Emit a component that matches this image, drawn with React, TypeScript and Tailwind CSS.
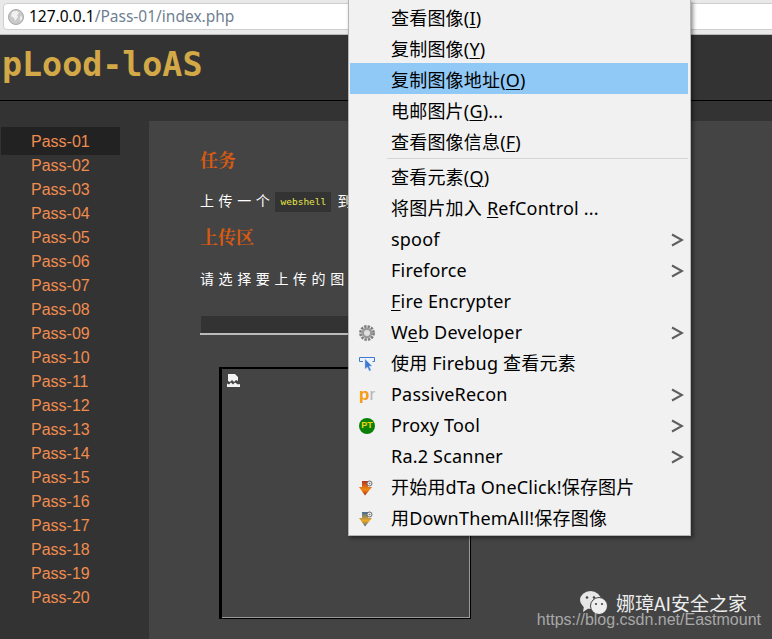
import type { ReactNode } from 'react'

const passes = Array.from({ length: 20 }, (_, i) => `Pass-${String(i + 1).padStart(2, '0')}`)

function Key({ children }: { children: ReactNode }) {
  return <span className="underline decoration-1 underline-offset-2">{children}</span>
}

function Globe() {
  return (
    <svg width="16" height="16" viewBox="0 0 16 16" className="shrink-0">
      <circle cx="8" cy="8" r="7.5" fill="#c9c9c9" stroke="#a8a8a8" />
      <path d="M5 2.5 9 2l2 2-2 2 1 2-3 4-1-3-3-2 1-3zM12 8l2-1v3l-2 2z" fill="#f1f1f1" />
    </svg>
  )
}

function Gear() {
  return (
    <svg width="16" height="16" viewBox="0 0 16 16">
      <circle cx="8" cy="8" r="6.6" fill="none" stroke="#7d7d7d" strokeWidth="2.6" strokeDasharray="2.4 1.1" />
      <circle cx="8" cy="8" r="5.4" fill="#9a9a9a" />
      <circle cx="8" cy="8" r="3" fill="#e0e0e0" />
    </svg>
  )
}

function Inspect() {
  return (
    <svg width="16" height="16" viewBox="0 0 16 16">
      <path d="M4 5.5H.5v-4h15v4h-2" fill="#eef4fc" stroke="#3f78d0" />
      <path d="M6 3l7 7-3 .2 2 4-1.6.8-2-4L6 13z" fill="#3f78d0" stroke="#a8c4ee" strokeWidth=".5" />
    </svg>
  )
}

function DownArrow({ id, top, mid, tip }: { id: string; top: string; mid: string; tip: string }) {
  return (
    <svg width="14" height="16" viewBox="0 0 14 16">
      <defs>
        <linearGradient id={id} x1="0" y1="0" x2="0" y2="1">
          <stop offset="0" stopColor={top} />
          <stop offset="0.6" stopColor={mid} />
          <stop offset="1" stopColor={tip} />
        </linearGradient>
      </defs>
      <path d="M3 1h6v6h4l-7 8.500-6-8.500h3z" fill={`url(#${id})`} />
      <circle cx="10.500" cy="3.500" r="2.500" fill="#eeeeee" stroke="#666666" />
      <circle cx="10.500" cy="3.500" r=".8" fill="#666666" />
    </svg>
  )
}

type Item = {
  label: ReactNode
  icon?: ReactNode
  arrow?: boolean
  active?: boolean
  rule?: boolean
}

const items: Item[] = [
  { label: <>查看图像(<Key>I</Key>)</> },
  { label: <>复制图像(<Key>Y</Key>)</> },
  { label: <>复制图像地址(<Key>O</Key>)</>, active: true },
  { label: <>电邮图片(<Key>G</Key>)...</> },
  { label: <>查看图像信息(<Key>F</Key>)</>, rule: true },
  { label: <>查看元素(<Key>Q</Key>)</> },
  { label: <>将图片加入 <Key>R</Key>efControl ...</> },
  { label: 'spoof', arrow: true },
  { label: 'Fireforce', arrow: true },
  { label: <><Key>F</Key>ire Encrypter</> },
  { label: <>W<Key>e</Key>b Developer</>, icon: <Gear />, arrow: true },
  { label: '使用 Firebug 查看元素', icon: <Inspect /> },
  {
    label: 'PassiveRecon',
    icon: (
      <span className="font-['Liberation_Sans',sans-serif] text-[17px] leading-none font-bold tracking-normal">
        <span className="text-[#f59b12]">p</span>
        <span className="font-normal text-[#b5b5b5]">r</span>
      </span>
    ),
    arrow: true,
  },
  {
    label: 'Proxy Tool',
    icon: (
      <span className="flex size-4 items-center justify-center rounded-full bg-[#0b8009] font-['Liberation_Sans',sans-serif] text-[9px] font-bold tracking-normal text-[#f5d20a]">
        PT
      </span>
    ),
    arrow: true,
  },
  { label: 'Ra.2 Scanner', arrow: true },
  {
    label: '开始用dTa OneClick!保存图片',
    icon: <DownArrow id="dta-red" top="#b8321f" mid="#f08a12" tip="#a82a18" />,
  },
  {
    label: '用DownThemAll!保存图像',
    icon: <DownArrow id="dta-blue" top="#3f6f98" mid="#f0a820" tip="#3f6f98" />,
  },
]

function ContextMenu() {
  return (
    <div className="absolute top-0 left-[348px] w-[343px] border-r border-b border-l border-[#b5b5b5] bg-[#f1f1f1] pt-px pr-[2px] pb-[3px] pl-px font-['Noto_Sans','Noto_Sans_CJK_SC',sans-serif] text-[18px] tracking-[0.2px] text-black shadow-[2px_2px_4px_rgba(0,0,0,0.45)]">
      {items.map((item, i) => (
        <div key={i}>
          <div
            className={`flex h-[31px] items-center pt-[4px] pr-[3px] leading-[27px] ${item.active ? 'bg-[#90c8f6]' : ''}`}
          >
            <span className="flex w-[41px] shrink-0 pl-[9px]">{item.icon}</span>
            <span className="flex-1 whitespace-nowrap">{item.label}</span>
            {item.arrow && (
              <svg width="13" height="14" viewBox="0 0 13 14" className="mr-[1px]">
                <path d="M1 1.500l10 5.500-10 5.500" fill="none" stroke="#5e5e5e" strokeWidth="2" />
              </svg>
            )}
          </div>
          {item.rule && <div className="mt-[2px] mb-[1px] ml-[37px] h-[1px] bg-[#d6d6d6]" />}
        </div>
      ))}
    </div>
  )
}

function Watermark() {
  return (
    <div className="absolute right-[11px] bottom-[10px] flex flex-col items-end">
      <div className="flex items-center gap-[7px] pr-[14px] font-['Noto_Sans_CJK_SC',sans-serif] text-[19px] leading-[24px] text-[#ededed]">
        <svg width="30" height="26" viewBox="0 0 30 26">
          <ellipse cx="11.500" cy="10" rx="10.500" ry="9" fill="#e6e6e6" />
          <path d="M5 16l-1 6 6-4z" fill="#e6e6e6" />
          <circle cx="20" cy="16" r="8.500" fill="#eeeeee" stroke="#444444" strokeWidth="1" />
          <circle cx="8" cy="7.500" r="1.300" fill="#444444" />
          <circle cx="15" cy="7.500" r="1.300" fill="#444444" />
          <circle cx="17" cy="14" r="1.100" fill="#444444" />
          <circle cx="23" cy="14" r="1.100" fill="#444444" />
        </svg>
        娜璋AI安全之家
      </div>
      <div className="-mt-[5px] font-['Liberation_Sans',sans-serif] text-[16px] leading-[18px] text-[#a8a8a8]">
        https://blog.csdn.net/Eastmount
      </div>
    </div>
  )
}

export default function App() {
  return (
    <div className="relative flex h-[639px] w-[772px] flex-col overflow-hidden bg-[#333333]">
      <div className="h-[35px] shrink-0 border-b border-[#b8b8b8] bg-[#e9e9e9] pt-[3px] pl-[3px]">
        <div className="flex h-[27px] w-[800px] items-center gap-[5px] rounded-[4px] border border-[#cfcfcf] bg-white pl-[4px] font-['Noto_Sans',sans-serif] text-[15.5px]">
          <Globe />
          <span>
            <span className="text-black">127.0.0.1</span>
            <span className="text-[#6f7f92]">/Pass-01/index.php</span>
          </span>
        </div>
      </div>

      <header className="h-[66px] shrink-0 border-b border-black pt-[10px] pl-[2px]">
        <span className="font-['DejaVu_Sans_Mono',monospace] text-[33.300px] leading-[40px] font-bold text-[#d3a846]">
          pLood-loAS
        </span>
      </header>

      <div className="flex flex-1">
        <nav className="w-[149px] shrink-0 pt-[28px] pl-px font-['Liberation_Sans',sans-serif] text-[16px] text-[#ef8c4f]">
          {passes.map((pass, i) => (
            <div
              key={pass}
              className={`w-[119px] pl-[30px] leading-[26px] ${i === 0 ? '-my-[2px] h-7 bg-[#222222] py-[2px]' : 'h-6'}`}
            >
              {pass}
            </div>
          ))}
        </nav>

        <main className="mt-[20px] flex-1 bg-[#444444] pl-[51px] font-['Noto_Sans_CJK_SC',sans-serif] text-[14px] text-white">
          <h2 className="mt-[26px] font-['Noto_Serif_CJK_SC','Noto_Sans_CJK_SC',serif] text-[18px] leading-[24px] font-bold text-[#d65a12]">
            任务
          </h2>
          <p className="mt-[21px] flex h-[20px] items-start tracking-[4.600px] whitespace-nowrap">
            <span className="leading-[16px]">上传一个</span>
            <code className="mr-[6px] ml-[1px] w-[56px] shrink-0 bg-[#333333] text-center font-['DejaVu_Sans_Mono',monospace] text-[9.500px] leading-[20px] tracking-normal text-[#e6e64a]">
              webshell
            </code>
            <span className="leading-[16px]">到</span>
          </p>
          <h2 className="mt-[12px] font-['Noto_Serif_CJK_SC','Noto_Sans_CJK_SC',serif] text-[18px] leading-[24px] font-bold text-[#d65a12]">
            上传区
          </h2>
          <p className="mt-[20px] leading-[20px] tracking-[4.600px] whitespace-nowrap">请选择要上传的图</p>
          <div className="mt-[28px] h-[19px] w-[420px] border-b-2 border-[#bbbbbb] bg-[#333333] shadow-[inset_1px_0_0_#444444]" />
          <div className="mt-[32px] ml-[19px] h-[252px] w-[252px] border-t-2 border-r border-b border-l-[3px] border-black p-[4px] shadow-[inset_-1px_-1px_0_#999999]">
            <svg width="13" height="14" viewBox="0 0 13 14" className="ml-px">
              <path d="M1 1h7l3 3v4l-2-1-2 2-2-2-2 2-2-1z" fill="#f4f4f4" />
              <path d="M0 10.500l2 1 2-2 2 2 2-2 3 2 2-.5v3H0z" fill="#f4f4f4" />
            </svg>
          </div>
        </main>
      </div>

      <ContextMenu />
      <Watermark />
    </div>
  )
}
